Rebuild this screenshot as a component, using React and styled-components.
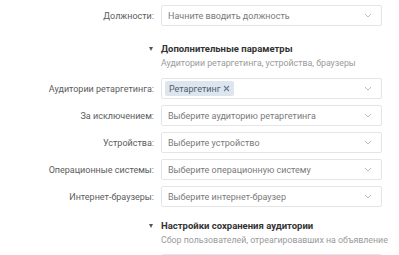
import React from 'react'
import styled, { createGlobalStyle } from 'styled-components'

const GlobalStyle = createGlobalStyle`
  body {
    margin: 0;
    background: #fff;
    font-family: Roboto, "Noto Sans", sans-serif;
  }
`

const Root = styled.div`
  width: 399px;
  height: 255px;
  overflow: hidden;
  padding-top: 5px;
  box-sizing: border-box;
`

const Row = styled.div`
  display: grid;
  grid-template-columns: 154px 221px;
  column-gap: 7px;
  align-items: center;
  margin-bottom: 6px;
`

const Label = styled.div`
  text-align: right;
  font-size: 9px;
  color: #5c5c5c;
  white-space: nowrap;
`

const Field = styled.div`
  height: 21px;
  box-sizing: border-box;
  border: 1px solid #e4e5e7;
  border-radius: 2px;
  display: flex;
  align-items: center;
  padding: 0 9px 0 6px;
  font-size: 9px;
  color: #7a7a7a;
  white-space: nowrap;
`

const FieldText = styled.span`
  flex: 1;
`

const Token = styled.span`
  display: inline-flex;
  align-items: center;
  gap: 3px;
  height: 15px;
  padding: 0 4px;
  margin-left: -3px;
  background: #dde5ee;
  border-radius: 2px;
  color: #4f5e70;
  font-size: 9px;
`

const Section = styled.div`
  display: grid;
  grid-template-columns: 154px 221px;
  column-gap: 7px;
  padding-top: ${(p) => p.$top}px;
  margin-bottom: ${(p) => p.$bottom}px;
`

const Arrow = styled.div`
  justify-self: end;
  align-self: start;
  margin-top: 6px;
  margin-right: 1px;
  width: 0;
  height: 0;
  border-left: 2.5px solid transparent;
  border-right: 2.5px solid transparent;
  border-top: 4px solid #555;
`

const Title = styled.div`
  font-size: 9.5px;
  font-weight: 700;
  color: #333;
  line-height: 15px;
  white-space: nowrap;
`

const Subtitle = styled.div`
  font-size: 8.8px;
  color: #9a9a9a;
  line-height: 14px;
  white-space: nowrap;
`

function Chevron() {
  return (
    <svg width="8" height="5" viewBox="0 0 8 5">
      <path d="M1 1l3 3 3-3" fill="none" stroke="#b8bbbf" strokeWidth="1" />
    </svg>
  )
}

function Select({ label, placeholder, children }) {
  return (
    <Row>
      <Label>{label}</Label>
      <Field>
        <FieldText>{children || placeholder}</FieldText>
        <Chevron />
      </Field>
    </Row>
  )
}

function SectionHead({ title, subtitle, top, bottom }) {
  return (
    <Section $top={top} $bottom={bottom}>
      <Arrow />
      <div>
        <Title>{title}</Title>
        <Subtitle>{subtitle}</Subtitle>
      </div>
    </Section>
  )
}

export default function App() {
  return (
    <Root>
      <GlobalStyle />
      <Select label="Должности:" placeholder="Начните вводить должность" />
      <SectionHead
        title="Дополнительные параметры"
        subtitle="Аудитории ретаргетинга, устройства, браузеры"
        top={9}
        bottom={8}
      />
      <Select label="Аудитории ретаргетинга:">
        <Token>
          Ретаргетинг
          <svg width="7" height="7" viewBox="0 0 7 7">
            <path d="M1 1l5 5M6 1l-5 5" stroke="#6b7b8e" strokeWidth="1.1" />
          </svg>
        </Token>
      </Select>
      <Select label="За исключением:" placeholder="Выберите аудиторию ретаргетинга" />
      <Select label="Устройства:" placeholder="Выберите устройство" />
      <Select label="Операционные системы:" placeholder="Выберите операционную систему" />
      <Select label="Интернет-браузеры:" placeholder="Выберите интернет-браузер" />
      <SectionHead
        title="Настройки сохранения аудитории"
        subtitle="Сбор пользователей, отреагировавших на объявление"
        top={5}
        bottom={7}
      />
      <Select label="" placeholder="" />
    </Root>
  )
}
